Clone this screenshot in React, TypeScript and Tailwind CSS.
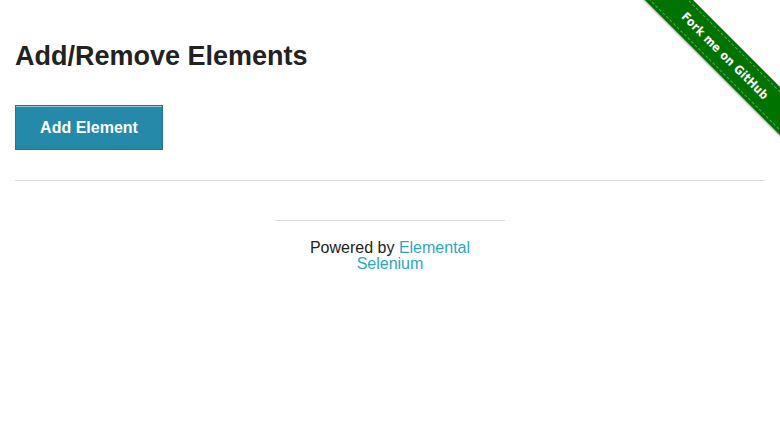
import React from "react";

function ForkRibbon() {
  return (
    <div className="absolute top-0 right-0 w-[149px] h-[149px] overflow-hidden pointer-events-none">
      <div className="absolute left-[-16.5px] top-[38.5px] w-[220px] h-[34px] rotate-45 bg-[#007200] shadow-[0_1px_2px_rgba(0,0,0,0.35)] flex items-center">
        <div className="w-full h-[28px] border-y border-dashed border-[rgba(255,255,255,0.35)] flex items-center justify-center">
          <span className="text-white text-[12px] font-bold leading-none font-['DejaVu_Sans_Condensed','DejaVu_Sans',sans-serif] tracking-[0.2px]">
            Fork me on GitHub
          </span>
        </div>
      </div>
    </div>
  );
}

export default function App() {
  return (
    <div className="relative w-full min-h-[441px] bg-white font-['Liberation_Sans',Arial,sans-serif] text-[#222]">
      <ForkRibbon />
      <div className="px-[15px]">
        <div className="pt-[40px]">
          <h3 className="text-[27px] leading-[32px] font-bold text-[#222]">Add/Remove Elements</h3>
        </div>

        <div className="mt-[33px]">
          <button className="w-[148px] h-[45px] bg-[#2589a9] border border-[#1f7694] shadow-[inset_0_1px_0_rgba(255,255,255,0.5)] text-white text-[16px] font-bold">
            Add Element
          </button>
        </div>

        <hr className="mt-[30px] border-t border-[#ddd]" />
      </div>

      <div className="flex justify-center mt-[39px]">
        <div className="w-[230px]">
          <hr className="border-t border-[#ddd]" />
          <div className="mt-[19px] px-[15px] text-center text-[16px] leading-[16px]">
            Powered by{" "}
            <a className="text-[#2ba6cb]" href="#">
              Elemental Selenium
            </a>
          </div>
        </div>
      </div>
    </div>
  );
}
